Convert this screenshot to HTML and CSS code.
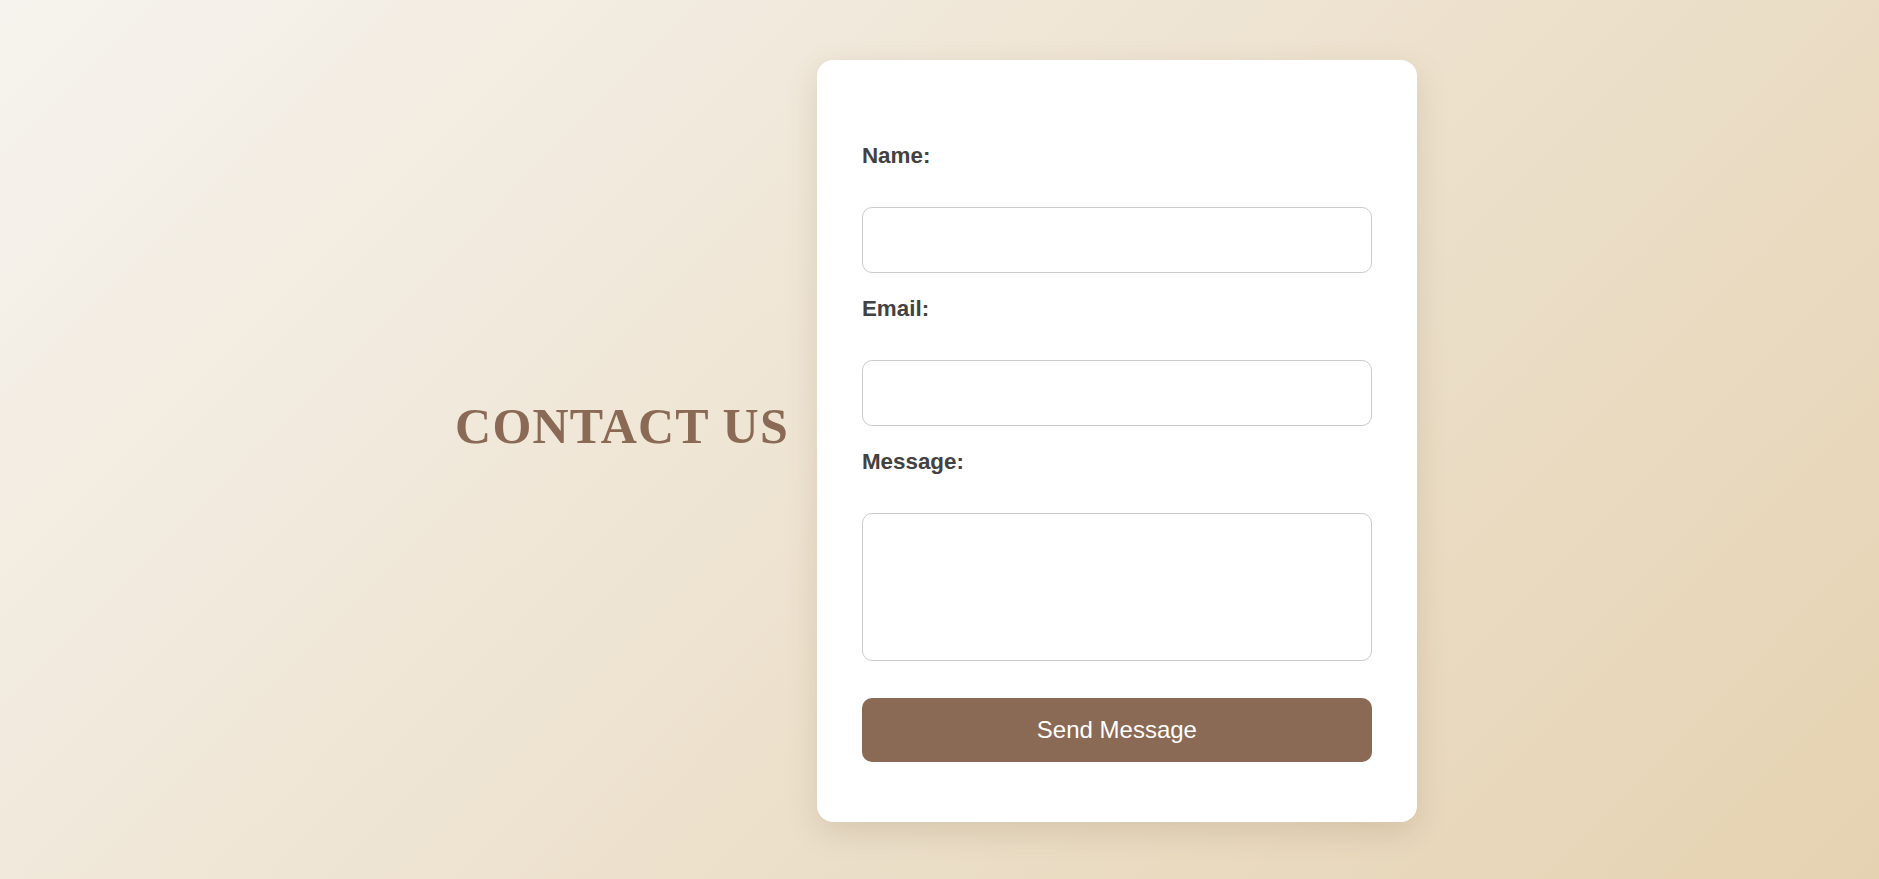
FILE: index.html
```html
<!DOCTYPE html>
<html lang="en">
<head>
<meta charset="utf-8">
<title>Contact Us</title>
<link rel="stylesheet" href="styles.css">
</head>
<body>
<main class="page">
  <h1 class="title">CONTACT US</h1>
  <form class="card">
    <div class="group">
      <label class="label" for="name">Name:</label>
      <input class="field" id="name" type="text">
    </div>
    <div class="group">
      <label class="label" for="email">Email:</label>
      <input class="field" id="email" type="email">
    </div>
    <div class="group">
      <label class="label" for="message">Message:</label>
      <textarea class="field area" id="message"></textarea>
    </div>
    <button class="send" type="button">Send Message</button>
  </form>
</main>
</body>
</html>
```

FILE: styles.css
```css
* { box-sizing: border-box; }
html, body { margin: 0; height: 100%; }
body {
  background: linear-gradient(135deg, #f6f3ee 0%, #e5d2b1 100%);
  font-family: "Liberation Sans", Arial, sans-serif;
  overflow: hidden;
}
.page {
  height: 879px;
  padding: 3px 7px 0 0;
  display: flex;
  justify-content: center;
  align-items: center;
  gap: 28px;
}
.title {
  margin: 0 0 31px 0;
  font-family: "Liberation Serif", "Times New Roman", serif;
  font-weight: 700;
  font-size: 50px;
  letter-spacing: 1.2px;
  color: #8b6a55;
  line-height: normal;
}
.card {
  width: 600px;
  background: #fff;
  border-radius: 16px;
  padding: 83px 45px 60px;
  box-shadow: 0 10px 30px rgba(120, 95, 60, 0.18);
  display: flex;
  flex-direction: column;
}
.group {
  display: flex;
  flex-direction: column;
  margin-bottom: 23px;
}
.group:last-of-type { margin-bottom: 37px; }
.label {
  display: block;
  font-size: 22.4px;
  line-height: 26px;
  font-weight: 700;
  color: #424242;
  margin-bottom: 38px;
}
.field {
  display: block;
  width: 100%;
  height: 66px;
  border: 1px solid #cccccc;
  border-radius: 10px;
  background: #fff;
  padding: 12px 16px;
  font-family: inherit;
  font-size: 18px;
  outline: none;
}
.area {
  height: 148px;
  resize: none;
}
.send {
  width: 100%;
  height: 64px;
  border: none;
  border-radius: 10px;
  background: #8b6a55;
  color: #fff;
  font-family: "Liberation Sans", Arial, sans-serif;
  font-size: 24px;
  cursor: pointer;
}
```
